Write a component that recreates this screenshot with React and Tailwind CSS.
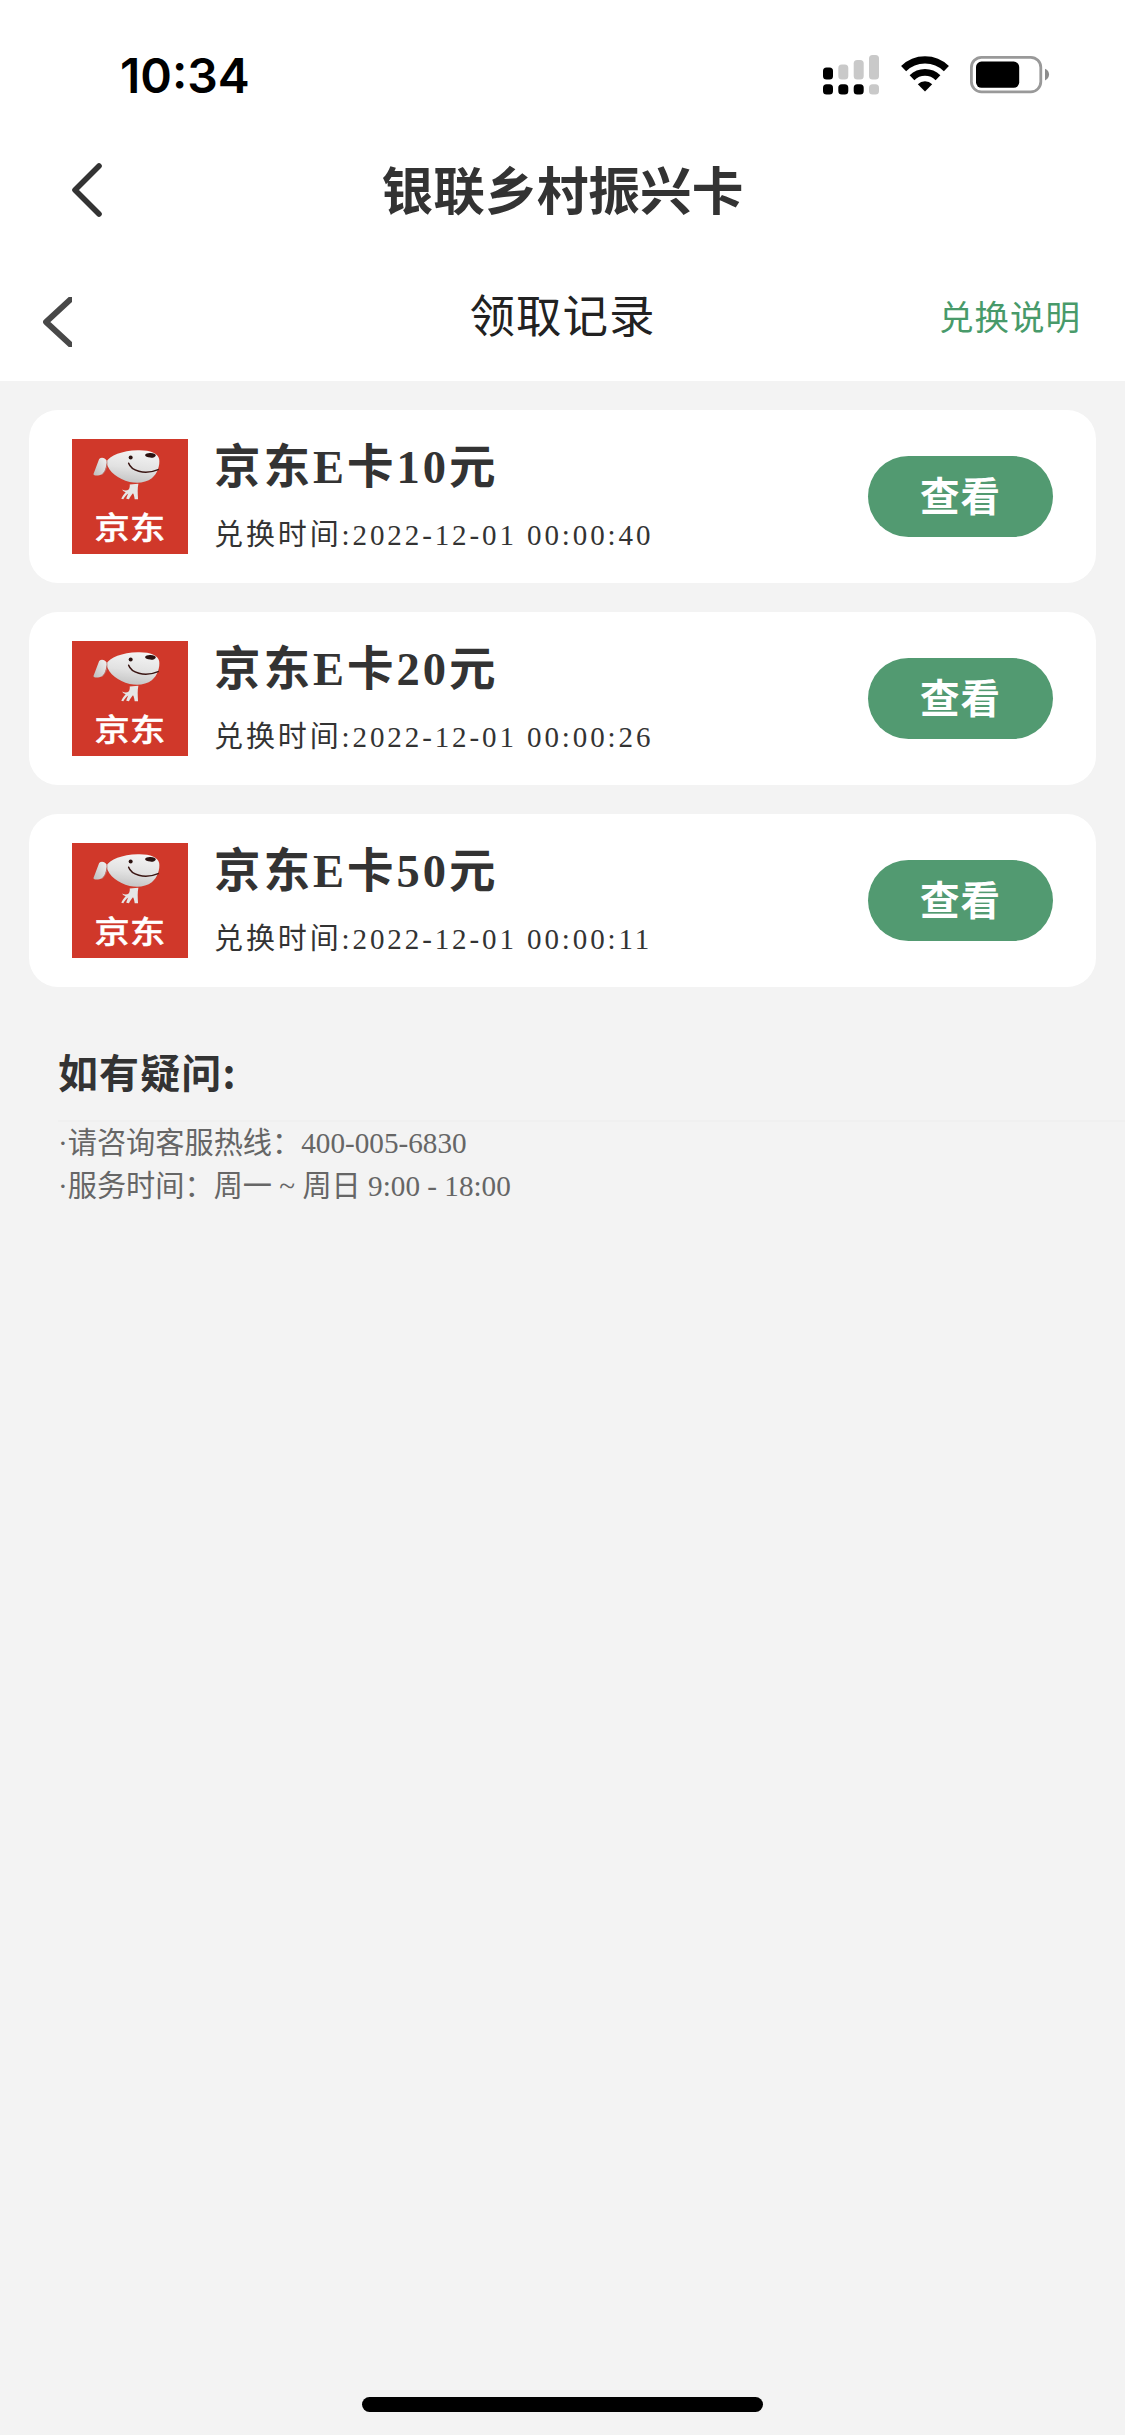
import React from 'react'

const records = [
  { id: 1, title: '京东E卡10元', time: '2022-12-01 00:00:40' },
  { id: 2, title: '京东E卡20元', time: '2022-12-01 00:00:26' },
  { id: 3, title: '京东E卡50元', time: '2022-12-01 00:00:11' }
]

function SignalIcon() {
  return (
    <svg width="56" height="40" viewBox="0 0 56 40" className="block">
      <rect x="0" y="12.5" width="10" height="12" rx="3.5" fill="#000" />
      <rect x="15.3" y="9.5" width="10" height="15" rx="3.5" fill="#c9c9c9" />
      <rect x="30.7" y="5" width="10" height="19.5" rx="3.5" fill="#c9c9c9" />
      <rect x="46" y="0" width="10" height="24.5" rx="3.5" fill="#c9c9c9" />
      <rect x="0" y="29.2" width="10" height="10.3" rx="3.5" fill="#000" />
      <rect x="15.3" y="29.2" width="10" height="10.3" rx="3.5" fill="#000" />
      <rect x="30.7" y="29.2" width="10" height="10.3" rx="3.5" fill="#000" />
      <rect x="46" y="29.2" width="10" height="10.3" rx="3.5" fill="#c9c9c9" />
    </svg>
  )
}

function WifiIcon() {
  return (
    <svg width="48" height="36" viewBox="0 0 48 36" className="block">
      <path d="M2.6 12.6 A30.5 30.5 0 0 1 45.4 12.6" fill="none" stroke="#000" strokeWidth="7.2" />
      <path d="M11 21.7 A18.6 18.6 0 0 1 37 21.7" fill="none" stroke="#000" strokeWidth="6.8" />
      <path d="M16.8 28.2 A10.4 10.4 0 0 1 31.2 28.2 L24 35.4 Z" fill="#000" />
    </svg>
  )
}

function BatteryIcon() {
  return (
    <svg width="80" height="38" viewBox="0 0 80 38" className="block">
      <rect x="1.4" y="1.4" width="69.4" height="34.4" rx="10" fill="none" stroke="#999" strokeWidth="2.8" />
      <rect x="6" y="5.6" width="43.2" height="26.2" rx="5.5" fill="#000" />
      <path d="M75 12.8 C80.4 14.6 80.4 22.6 75 24.4 Z" fill="#8c8c8c" />
    </svg>
  )
}

function JdLogo() {
  return (
    <svg width="116" height="115" viewBox="0 0 346 346" preserveAspectRatio="none" className="block shrink-0">
      <defs>
        <linearGradient id="head" x1="0.6" y1="0" x2="0.4" y2="1">
          <stop offset="0" stopColor="#f4f4f4" />
          <stop offset="0.55" stopColor="#e2e2e2" />
          <stop offset="1" stopColor="#c4c4c4" />
        </linearGradient>
        <linearGradient id="ear" x1="1" y1="0" x2="0" y2="1">
          <stop offset="0" stopColor="#f2f2f2" />
          <stop offset="1" stopColor="#bdbdbd" />
        </linearGradient>
      </defs>
      <rect width="346" height="346" fill="#d0382a" />
      <path
        d="M102 70 C112 50 150 35 196 34 C232 33 256 42 260 60 C263 78 255 104 238 118 C222 131 196 134 172 129 C138 121 110 100 102 70 Z"
        fill="url(#head)"
      />
      <path d="M104 66 C98 56 88 53 81 60 C76 72 70 92 64 105 C64 111 78 112 90 106 C98 100 102 86 104 66 Z" fill="url(#ear)" />
      <path d="M104 66 C107 82 100 98 90 106" fill="none" stroke="#b9807b" strokeWidth="2.5" />
      <circle cx="175" cy="56" r="6" fill="#2b1210" />
      <ellipse cx="234" cy="49" rx="16" ry="7" transform="rotate(3 234 49)" fill="#2b1210" />
      <path d="M169 73 C176 94 214 110 257 92" fill="none" stroke="#3a1512" strokeWidth="4.5" strokeLinecap="round" />
      <path
        d="M172 137 L198 135 C195 148 196 164 197 181 L187 181 C186 174 185 168 182 163 C178 168 173 174 170 181 L162 180 C163 174 166 168 168 164 C162 168 157 174 153 181 L147 180 C150 173 155 165 160 160 C156 159 151 156 150 152 C155 155 164 156 169 152 C172 148 173 142 172 137 Z"
        fill="#e6e6e6"
      />
      <text
        x="0"
        y="0"
        transform="translate(67 300) scale(1 0.88)"
        fontSize="105"
        fontWeight="500"
        fill="#fff"
        stroke="#fff"
        strokeWidth="1.5"
        textLength="211"
        lengthAdjust="spacing"
        className="font-['Noto_Sans_CJK_SC',sans-serif]"
      >
        京东
      </text>
    </svg>
  )
}

function RecordCard({ record }) {
  return (
    <div className="flex h-[173px] items-center rounded-[29px] bg-white px-[43px]">
      <JdLogo />
      <div className="ml-[26px] flex-1 text-[#333]">
        <div className="text-[46.5px] leading-[60px] font-bold tracking-[3px] whitespace-nowrap">{record.title}</div>
        <div className="mt-[16px] text-[29px] leading-[42px] tracking-[2.9px] whitespace-nowrap">兑换时间:{record.time}</div>
      </div>
      <button
        type="button"
        className="flex h-[81px] w-[185px] items-center justify-center rounded-full bg-[#529a71] pb-[5px] font-['Noto_Sans_CJK_SC',sans-serif] text-[39.5px] leading-none font-bold tracking-[1px] text-white"
      >
        查看
      </button>
    </div>
  )
}

export default function App() {
  return (
    <div className="flex h-[2435px] w-[1125px] flex-col bg-[#f3f3f3] font-['Liberation_Serif','Noto_Sans_CJK_SC',serif]">
      <header className="h-[381px] bg-white font-['Noto_Sans_CJK_SC',sans-serif]">
        <div className="flex h-[132px] items-start pt-[55px] pr-[75px] pl-[120px]">
          <div className="mt-[-7px] flex-1 font-['Inter',sans-serif] text-[48px] leading-[56px] font-semibold text-black">10:34</div>
          <SignalIcon />
          <div className="mt-[1px] ml-[22px]">
            <WifiIcon />
          </div>
          <div className="mt-[1px] ml-[21px]">
            <BatteryIcon />
          </div>
        </div>

        <div className="grid h-[116px] grid-cols-[1fr_auto_1fr] items-center">
          <svg width="31" height="54" viewBox="0 0 31 54" className="ml-[71px]">
            <path d="M28 3 L4 27 L28 51" fill="none" stroke="#333" strokeWidth="5.6" strokeLinecap="round" strokeLinejoin="round" />
          </svg>
          <h1 className="pb-[4px] text-[51.7px] leading-[60px] font-bold text-[#333]">银联乡村振兴卡</h1>
        </div>

        <div className="grid h-[133px] grid-cols-[1fr_auto_1fr] items-center">
          <svg width="30" height="50" viewBox="0 0 30 50" className="mt-[15px] ml-[42px]">
            <path d="M31 0 L4 25 L31 50" fill="none" stroke="#484848" strokeWidth="5.8" strokeLinejoin="round" />
          </svg>
          <h2 className="pb-[4px] text-[45.5px] leading-[60px] tracking-[1px] text-[#222]">领取记录</h2>
          <a className="mr-[44px] justify-self-end text-[34.5px] leading-[48px] tracking-[1px] text-[#489a6a]">兑换说明</a>
        </div>
      </header>

      <main className="flex-1 pt-[29px]">
        <div className="flex flex-col gap-[29px] px-[29px]">
          {records.map((record) => (
            <RecordCard key={record.id} record={record} />
          ))}
        </div>

        <section className="mt-[54px] ml-[58px]">
          <h3 className="h-[79px] font-['Noto_Sans_CJK_SC',sans-serif] text-[40px] leading-[60px] font-bold tracking-[1.1px] text-[#333]">
            如有疑问:
          </h3>
          <div className="border-t-2 border-[#f0f0f0] text-[29.2px] leading-[43px] text-[#666]">
            <p>·请咨询客服热线：400-005-6830</p>
            <p>·服务时间：周一 ~ 周日 9:00 - 18:00</p>
          </div>
        </section>
      </main>

      <div className="mx-auto mb-[23px] h-[15px] w-[401px] rounded-full bg-black" />
    </div>
  )
}
